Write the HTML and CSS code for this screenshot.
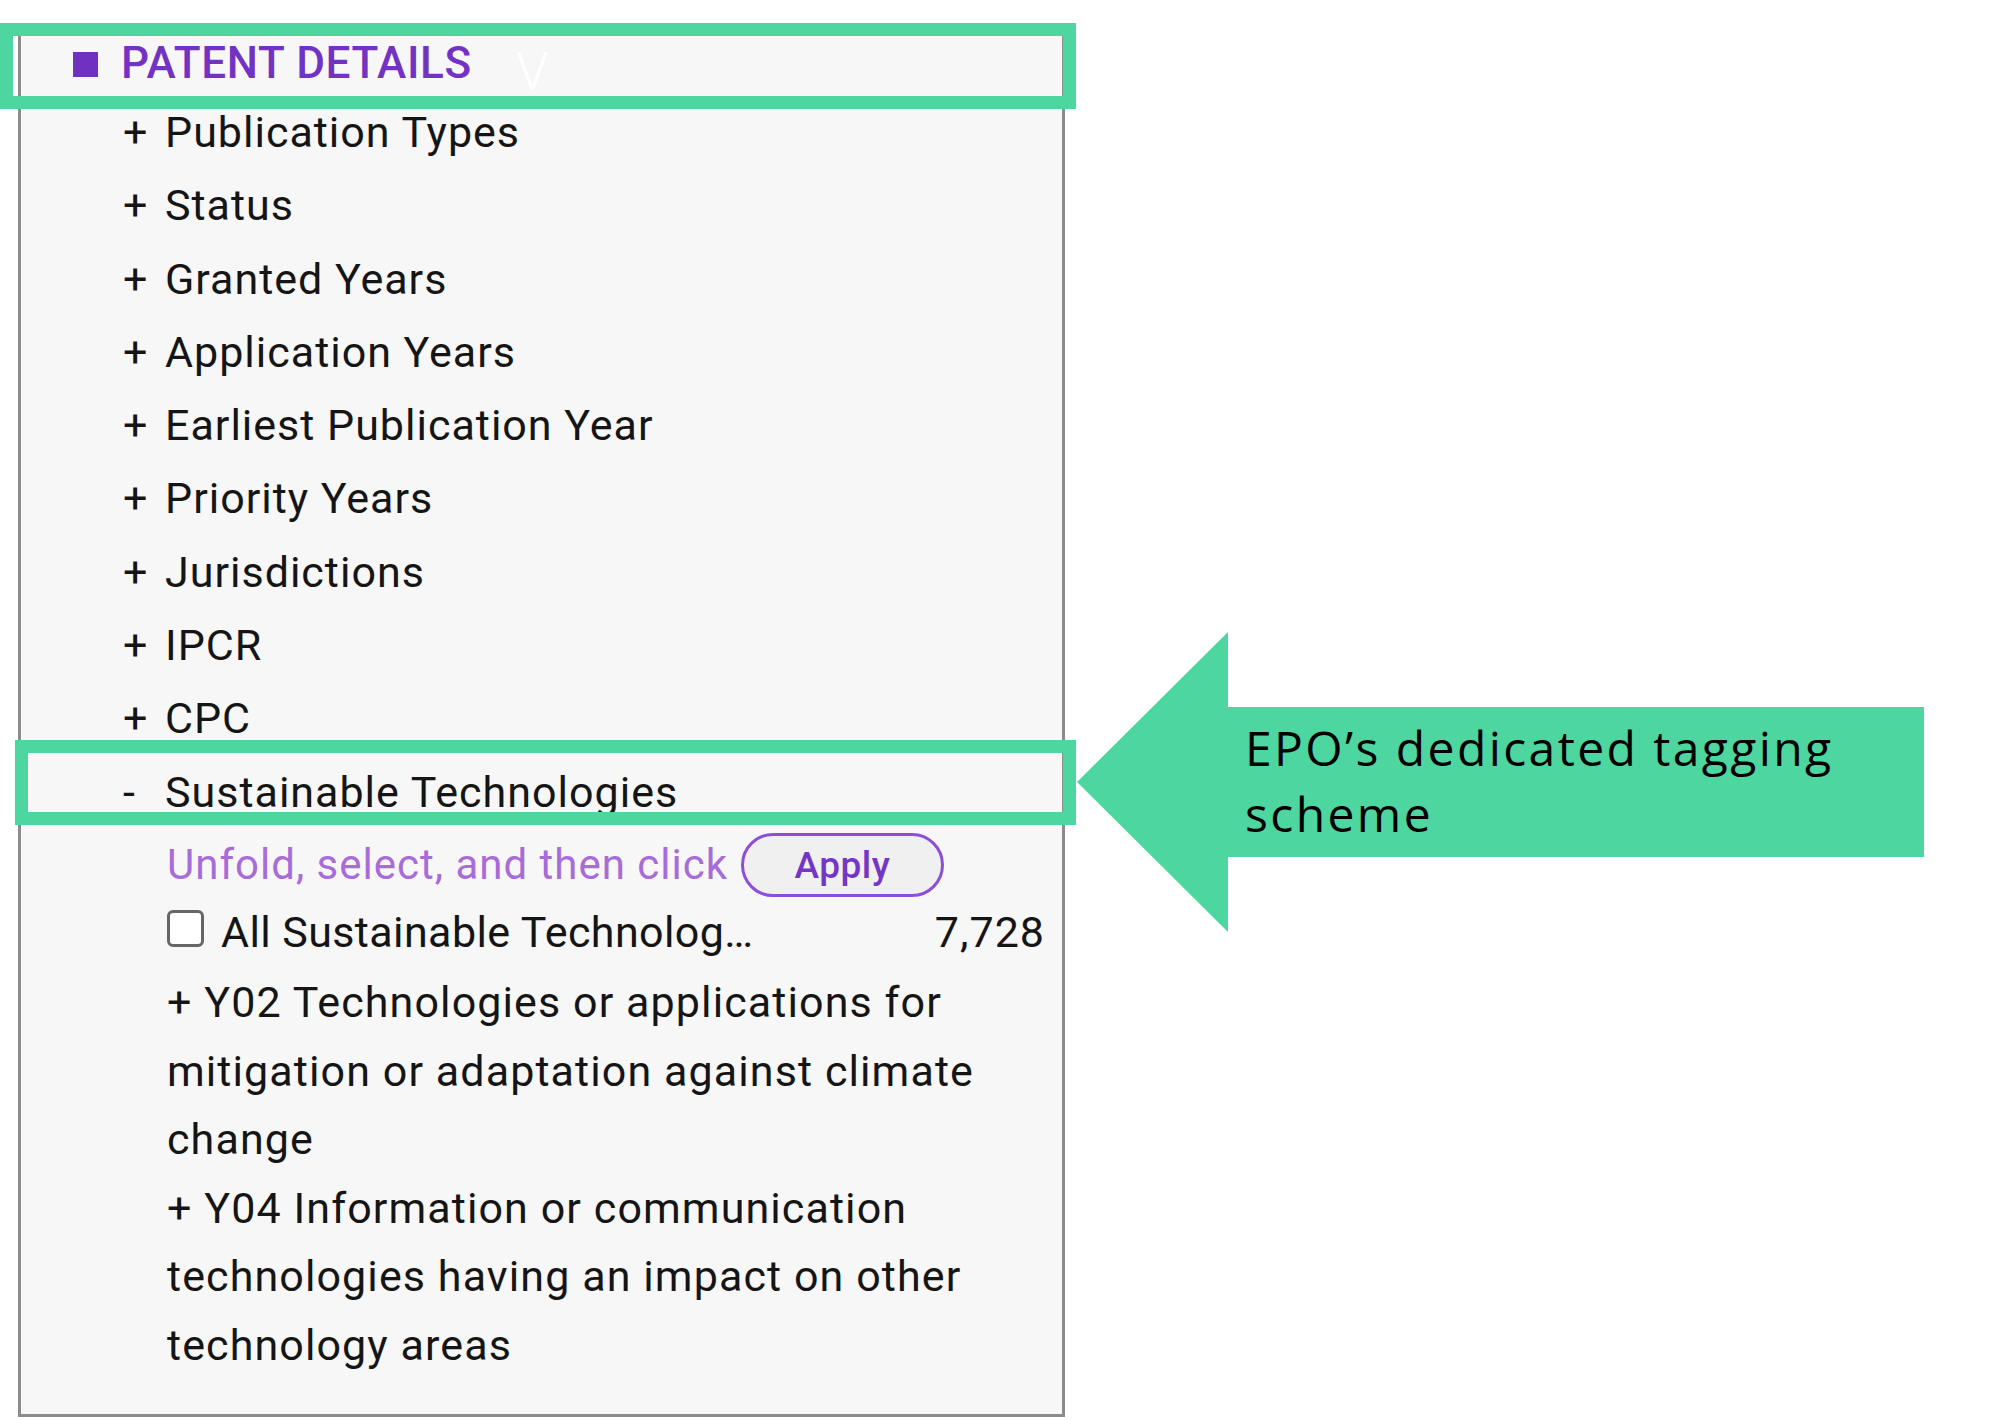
FILE: index.html
```html
<!DOCTYPE html>
<html lang="en">
<head>
    <meta charset="UTF-8">
    <meta name="viewport" content="width=device-width, initial-scale=1.0">
    <title>Patent Details filter</title>
    <link rel="stylesheet" href="styles.css">
</head>
<body>
    <div class="page">
        <div class="panel">
            <div class="section-head highlight">
                <span class="square"></span>
                <span class="section-title">PATENT DETAILS</span>
                <span class="chevron">V</span>
            </div>

            <ul class="facets">
                <li><span class="sign">+</span>Publication Types</li>
                <li><span class="sign">+</span>Status</li>
                <li><span class="sign">+</span>Granted Years</li>
                <li><span class="sign">+</span>Application Years</li>
                <li><span class="sign">+</span>Earliest Publication Year</li>
                <li><span class="sign">+</span>Priority Years</li>
                <li><span class="sign">+</span>Jurisdictions</li>
                <li><span class="sign">+</span>IPCR</li>
                <li><span class="sign">+</span>CPC</li>
                <li class="open highlight"><span class="sign">-</span>Sustainable Technologies</li>
            </ul>

            <div class="subtree">
                <div class="apply-row">
                    <span class="hint">Unfold, select, and then click</span>
                    <button class="apply">Apply</button>
                </div>
                <label class="all-row">
                    <span class="box"></span>
                    <span class="all-label">All Sustainable Technolog…</span>
                    <span class="count">7,728</span>
                </label>
                <div class="node">+ Y02 Technologies or applications for mitigation or adaptation against climate change</div>
                <div class="node">+ Y04 Information or communication technologies having an impact on other technology areas</div>
            </div>
        </div>

        <div class="callout">
            <svg class="arrow" viewBox="0 0 847 300" preserveAspectRatio="none">
                <polygon points="0,150 151,0 151,75 847,75 847,225 151,225 151,300" />
            </svg>
            <p class="callout-text">EPO’s dedicated tagging scheme</p>
        </div>
    </div>
</body>
</html>
```

FILE: styles.css
```css
* {
    margin: 0;
    padding: 0;
    box-sizing: border-box;
}

body {
    background: #fff;
    font-family: Roboto, "Liberation Sans", sans-serif;
    color: #151515;
}

.page {
    display: flex;
    align-items: flex-start;
    padding-top: 36px;
}

.panel {
    width: 1047px;
    margin-left: 18px;
    background: #f7f7f7;
    border: 3px solid #8c8c8c;
    border-top: none;
    padding-bottom: 35px;
}

.highlight {
    outline: 13px solid #4dd69f;
}

/* header */
.section-head {
    display: flex;
    align-items: flex-start;
    height: 60px;
    width: 1050px;
    margin-left: -8px;
    padding-left: 60px;
    position: relative;
    z-index: 1;
}

.square {
    width: 25px;
    height: 25px;
    margin-top: 16px;
    margin-right: 23px;
    background: #7030c0;
}

.section-title {
    font-size: 44px;
    line-height: 54px;
    font-weight: 500;
    color: #7232c4;
    letter-spacing: 0.7px;
}

.chevron {
    margin-left: 44px;
    padding-top: 9px;
    font-size: 53px;
    line-height: 54px;
    font-weight: 300;
    color: #fff;
}

/* facet list */
.facets {
    list-style: none;
}

.facets li {
    font-size: 43px;
    line-height: 73.25px;
    letter-spacing: 1px;
    padding-left: 102px;
}

.sign {
    display: inline-block;
    width: 42px;
}

.facets li.open {
    height: 59px;
    line-height: 59px;
    padding-top: 10px;
    margin-top: -2px;
    margin-left: 7px;
    margin-right: -1px;
    padding-left: 95px;
    position: relative;
    z-index: 1;
}

/* expanded subtree */
.subtree {
    padding-left: 146px;
    padding-right: 17px;
    font-size: 43px;
    letter-spacing: 1px;
}

.apply-row {
    display: flex;
    align-items: center;
    height: 64px;
    margin-top: 21px;
}

.hint {
    font-size: 42px;
    line-height: 42px;
    color: #a86cda;
    margin-right: 13px;
}

.apply {
    width: 203px;
    height: 64px;
    border: 3px solid #8d4fd8;
    border-radius: 32px;
    background: #f0f0f0;
    font-family: Roboto, "Liberation Sans", sans-serif;
    font-size: 37px;
    font-weight: 500;
    letter-spacing: 0.5px;
    color: #7436c6;
}

.all-row {
    display: flex;
    align-items: flex-start;
    margin-top: 13px;
    line-height: 44px;
}

.box {
    width: 37px;
    height: 37px;
    margin-right: 17px;
    border: 3px solid #666;
    border-radius: 6px;
    background: #fff;
}

.all-label {
    letter-spacing: 0.4px;
}

.count {
    margin-left: auto;
}

.node {
    line-height: 68.5px;
    letter-spacing: 1.1px;
}

.all-row + .node {
    margin-top: 14px;
}

/* annotation arrow */
.callout {
    position: relative;
    width: 847px;
    height: 300px;
    margin-left: 12px;
    margin-top: 596px;
}

.arrow {
    position: absolute;
    top: 0;
    left: 0;
    width: 100%;
    height: 100%;
}

.arrow polygon {
    fill: #4dd69f;
}

.callout-text {
    position: relative;
    padding: 83px 20px 0 168px;
    font-family: "Open Sans", sans-serif;
    font-size: 48px;
    line-height: 66px;
    letter-spacing: 2.4px;
    color: #000;
}
```
